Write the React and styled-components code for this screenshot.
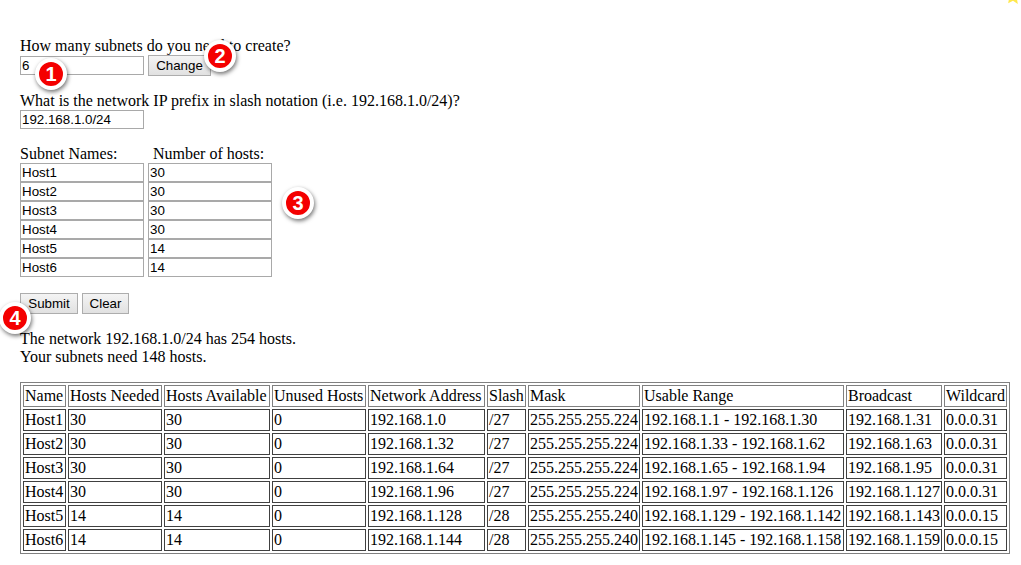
import React from 'react'
import styled, { createGlobalStyle } from 'styled-components'

const GlobalStyle = createGlobalStyle`
  html, body {
    margin: 0;
    padding: 0;
    background: #fff;
    color: #000;
    font-family: "Liberation Serif", "Times New Roman", serif;
    font-size: 16px;
  }
`

const Page = styled.div`
  position: relative;
  width: 1021px;
  height: 565px;
  overflow: hidden;
  box-sizing: border-box;
  padding: 37px 0 0 20px;
`

const Section = styled.section`
  margin-bottom: ${p => p.$gap || 0}px;
`

const Line = styled.div`
  height: 18px;
  line-height: 18px;
  white-space: nowrap;
`

const Row = styled.div`
  display: flex;
  align-items: center;
  gap: 4px;
  height: 21px;
`

const Field = styled.input`
  box-sizing: border-box;
  display: block;
  width: 124px;
  height: 19px;
  margin: 0;
  padding: 0 1px;
  border: 1px solid #a9a9a9;
  border-radius: 0;
  outline: none;
  background: #fff;
  color: #000;
  font-family: "Liberation Sans", Arial, sans-serif;
  font-size: 13.333px;
`

const Button = styled.button`
  box-sizing: border-box;
  width: ${p => p.$width}px;
  height: 21px;
  margin: 0;
  padding: 0;
  border: 1px solid #adadad;
  border-radius: 0;
  background: linear-gradient(#f4f4f4, #e1e1e1);
  color: #000;
  font-family: "Liberation Sans", Arial, sans-serif;
  font-size: 13.333px;
`

const HostGrid = styled.div`
  display: grid;
  grid-template-columns: 124px 124px;
  column-gap: 4px;
`

const HostLabel = styled.div`
  height: 18px;
  line-height: 18px;
  white-space: nowrap;
  padding-left: ${p => p.$indent || 0}px;
`

const Results = styled.table`
  border: 1px solid #808080;
  border-spacing: 2px;
  border-collapse: separate;
  font-size: 16px;
`

const Cell = styled.td`
  border: 1px solid #404040;
  padding: 1px;
  height: 18px;
  line-height: 18px;
  white-space: nowrap;
  text-align: left;
`

const Head = styled(Cell).attrs({ as: 'th' })`
  min-width: ${p => p.$width}px;
  border-color: #808080;
  font-weight: normal;
`

const Badge = styled.div`
  position: absolute;
  left: ${p => p.$x - 16}px;
  top: ${p => p.$y - 16}px;
  box-sizing: border-box;
  width: 32px;
  height: 32px;
  border: 4px solid #fff;
  border-radius: 50%;
  background: #f40000;
  box-shadow: 1px 2px 4px rgba(0, 0, 0, 0.55);
  color: #fff;
  font-family: "Liberation Sans", Arial, sans-serif;
  font-size: 20px;
  font-weight: bold;
  line-height: 24px;
  text-align: center;
`

const Star = styled.svg`
  position: absolute;
  left: 1004px;
  top: -12px;
  width: 18px;
  height: 17px;
`

const hosts = [
  ['Host1', '30'],
  ['Host2', '30'],
  ['Host3', '30'],
  ['Host4', '30'],
  ['Host5', '14'],
  ['Host6', '14'],
]

// min widths keep the columns at the same pitch as the original table
const columns = [
  ['Name', 39],
  ['Hosts Needed', 90],
  ['Hosts Available', 102],
  ['Unused Hosts', 90],
  ['Network Address', 113],
  ['Slash', 35],
  ['Mask', 108],
  ['Usable Range', 198],
  ['Broadcast', 92],
  ['Wildcard', 57],
]

const subnets = [
  ['Host1', '30', '30', '0', '192.168.1.0', '/27', '255.255.255.224', '192.168.1.1 - 192.168.1.30', '192.168.1.31', '0.0.0.31'],
  ['Host2', '30', '30', '0', '192.168.1.32', '/27', '255.255.255.224', '192.168.1.33 - 192.168.1.62', '192.168.1.63', '0.0.0.31'],
  ['Host3', '30', '30', '0', '192.168.1.64', '/27', '255.255.255.224', '192.168.1.65 - 192.168.1.94', '192.168.1.95', '0.0.0.31'],
  ['Host4', '30', '30', '0', '192.168.1.96', '/27', '255.255.255.224', '192.168.1.97 - 192.168.1.126', '192.168.1.127', '0.0.0.31'],
  ['Host5', '14', '14', '0', '192.168.1.128', '/28', '255.255.255.240', '192.168.1.129 - 192.168.1.142', '192.168.1.143', '0.0.0.15'],
  ['Host6', '14', '14', '0', '192.168.1.144', '/28', '255.255.255.240', '192.168.1.145 - 192.168.1.158', '192.168.1.159', '0.0.0.15'],
]

const App = () => (
  <Page>
    <GlobalStyle />
    <Star viewBox="0 0 24 24">
      <path d="M12 1l3.4 7.2 7.6 1-5.6 5.4 1.4 7.9L12 18l-6.8 3.5 1.4-7.9L1 8.2l7.6-1z" fill="#ffe84d" />
    </Star>

    <Section $gap={16}>
      <Line>How many subnets do you need to create?</Line>
      <Row>
        <Field readOnly value="6" />
        <Button $width={63}>Change</Button>
      </Row>
    </Section>

    <Section $gap={16}>
      <Line>What is the network IP prefix in slash notation (i.e. 192.168.1.0/24)?</Line>
      <Field readOnly value="192.168.1.0/24" />
    </Section>

    <Section $gap={16}>
      <HostGrid>
        <HostLabel>Subnet Names:</HostLabel>
        <HostLabel $indent={5}>Number of hosts:</HostLabel>
        {hosts.map(([name, count]) => (
          <React.Fragment key={name}>
            <Field readOnly value={name} />
            <Field readOnly value={count} />
          </React.Fragment>
        ))}
      </HostGrid>
    </Section>

    <Section $gap={16}>
      <Row>
        <Button $width={58}>Submit</Button>
        <Button $width={47}>Clear</Button>
      </Row>
    </Section>

    <Section $gap={16}>
      <Line>The network 192.168.1.0/24 has 254 hosts.</Line>
      <Line>Your subnets need 148 hosts.</Line>
    </Section>

    <Results>
      <thead>
        <tr>
          {columns.map(([label, width]) => <Head key={label} $width={width}>{label}</Head>)}
        </tr>
      </thead>
      <tbody>
        {subnets.map(row => (
          <tr key={row[0]}>
            {row.map((value, i) => <Cell key={i}>{value}</Cell>)}
          </tr>
        ))}
      </tbody>
    </Results>

    <Badge $x={51} $y={74}>1</Badge>
    <Badge $x={220} $y={56}>2</Badge>
    <Badge $x={298} $y={203}>3</Badge>
    <Badge $x={15} $y={318}>4</Badge>
  </Page>
)

export default App
